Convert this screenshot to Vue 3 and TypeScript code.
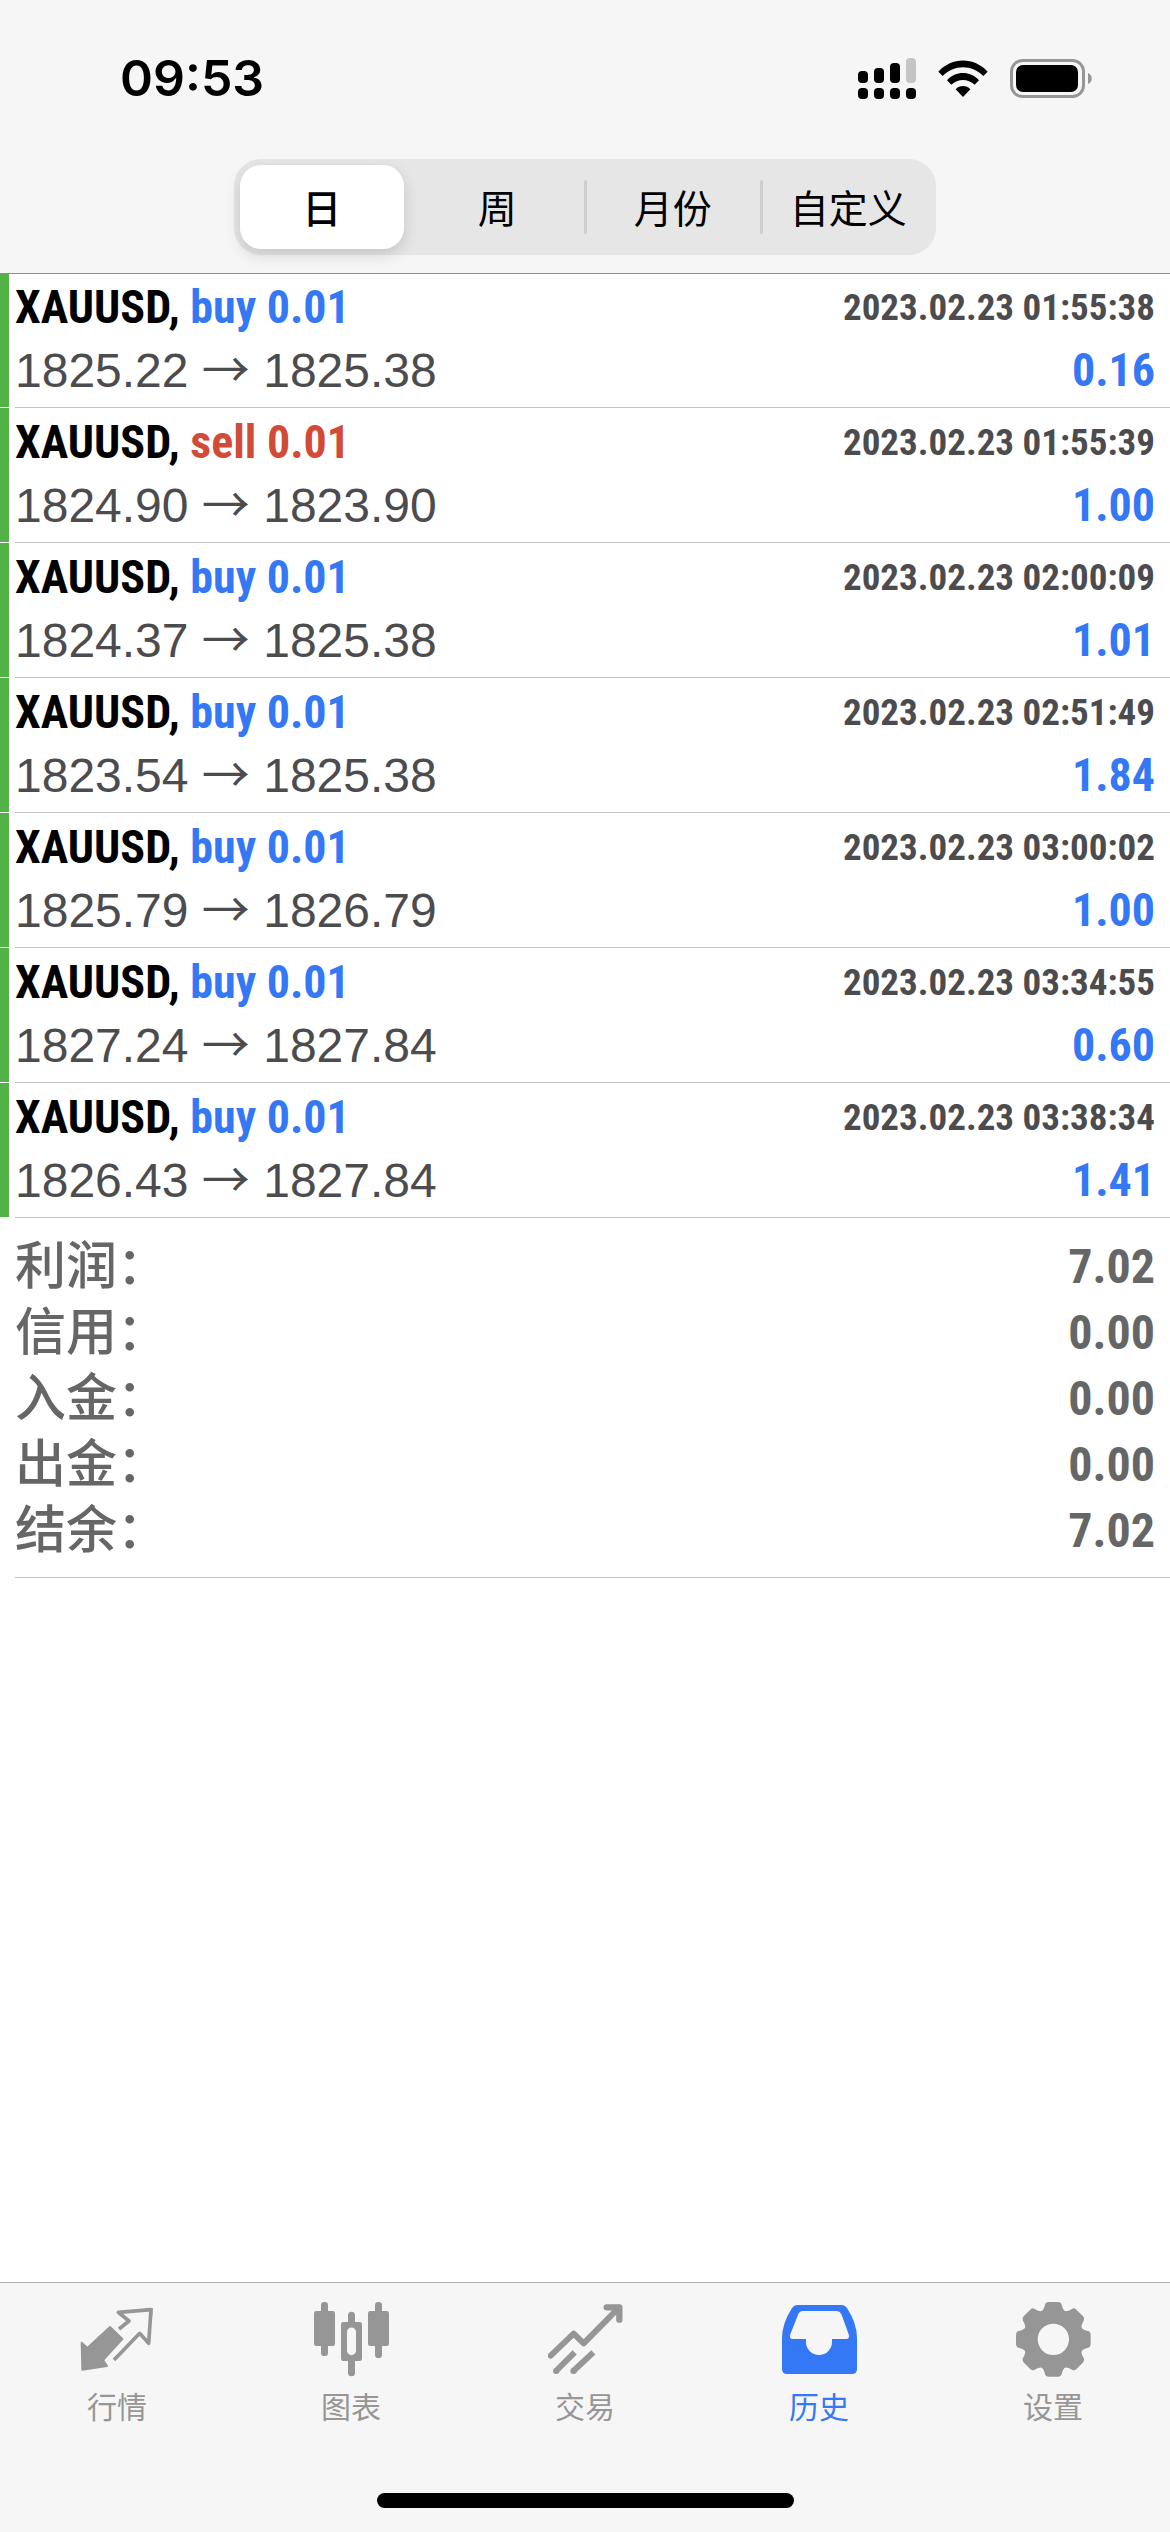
<script setup lang="ts">
import { ref } from 'vue'

type Side = 'buy' | 'sell'

interface Deal {
  symbol: string
  side: Side
  volume: string
  open: string
  close: string
  time: string
  profit: string
}

const periods: string[] = ['日', '周', '月份', '自定义']
const activePeriod = ref<number>(0)

const deals: Deal[] = [
  { symbol: 'XAUUSD', side: 'buy', volume: '0.01', open: '1825.22', close: '1825.38', time: '2023.02.23 01:55:38', profit: '0.16' },
  { symbol: 'XAUUSD', side: 'sell', volume: '0.01', open: '1824.90', close: '1823.90', time: '2023.02.23 01:55:39', profit: '1.00' },
  { symbol: 'XAUUSD', side: 'buy', volume: '0.01', open: '1824.37', close: '1825.38', time: '2023.02.23 02:00:09', profit: '1.01' },
  { symbol: 'XAUUSD', side: 'buy', volume: '0.01', open: '1823.54', close: '1825.38', time: '2023.02.23 02:51:49', profit: '1.84' },
  { symbol: 'XAUUSD', side: 'buy', volume: '0.01', open: '1825.79', close: '1826.79', time: '2023.02.23 03:00:02', profit: '1.00' },
  { symbol: 'XAUUSD', side: 'buy', volume: '0.01', open: '1827.24', close: '1827.84', time: '2023.02.23 03:34:55', profit: '0.60' },
  { symbol: 'XAUUSD', side: 'buy', volume: '0.01', open: '1826.43', close: '1827.84', time: '2023.02.23 03:38:34', profit: '1.41' },
]

const totals: { label: string; value: string }[] = [
  { label: '利润：', value: '7.02' },
  { label: '信用：', value: '0.00' },
  { label: '入金：', value: '0.00' },
  { label: '出金：', value: '0.00' },
  { label: '结余：', value: '7.02' },
]

const tabs: { id: string; label: string }[] = [
  { id: 'quotes', label: '行情' },
  { id: 'charts', label: '图表' },
  { id: 'trade', label: '交易' },
  { id: 'history', label: '历史' },
  { id: 'settings', label: '设置' },
]
const activeTab = ref<string>('history')
const toothAngles: number[] = [0, 45, 90, 135, 180, 225, 270, 315]
</script>

<template>
  <div class="screen">
    <header class="header">
      <div class="status-bar">
        <time class="clock">09:53</time>
        <div class="status-icons">
          <svg class="signal" viewBox="0 0 58 41" aria-hidden="true">
            <rect x="0" y="13" width="10" height="12" rx="4" />
            <rect x="16" y="10" width="10" height="15" rx="4" />
            <rect x="32" y="5" width="10" height="20" rx="4" />
            <rect x="48" y="0" width="10" height="25" rx="4" fill="#c5c5c5" />
            <rect x="0" y="30" width="10" height="11" rx="4" />
            <rect x="16" y="30" width="10" height="11" rx="4" />
            <rect x="32" y="30" width="10" height="11" rx="4" />
            <rect x="48" y="30" width="10" height="11" rx="4" />
          </svg>
          <svg class="wifi" viewBox="0 0 150 111" aria-hidden="true">
            <path d="M1 35 C42 -10 108 -10 149 35 L136 48 C102 13 48 13 14 48 Z" />
            <path d="M27 61 C54 32 96 32 123 61 L110 74 C90 55 60 55 40 74 Z" />
            <path d="M53 88 C65 75 85 75 97 88 L75 111 Z" />
          </svg>
          <svg class="battery" viewBox="0 0 82 39" aria-hidden="true">
            <rect x="1.5" y="1.5" width="72" height="36" rx="11" fill="none" stroke="#969696" stroke-width="3" />
            <rect x="6" y="6" width="62" height="27" rx="7" />
            <path d="M78 14 C83 16 83 23 78 25 Z" fill="#969696" />
          </svg>
        </div>
      </div>
      <div class="segments">
        <button
          v-for="(period, index) in periods"
          :key="period"
          type="button"
          class="segment"
          :class="{ selected: index === activePeriod }"
          :aria-pressed="index === activePeriod"
          @click="activePeriod = index"
        >{{ period }}</button>
      </div>
    </header>

    <main class="content">
      <ul class="deals">
        <li v-for="deal in deals" :key="deal.time" class="deal">
          <span class="marker"></span>
          <div class="deal-body">
            <div class="deal-line">
              <span class="title">{{ deal.symbol }}, <span :class="deal.side">{{ deal.side }} {{ deal.volume }}</span></span>
              <time class="deal-time">{{ deal.time }}</time>
            </div>
            <div class="deal-line">
              <span class="prices">{{ deal.open }} <span class="arrow">→</span> {{ deal.close }}</span>
              <span class="profit">{{ deal.profit }}</span>
            </div>
          </div>
        </li>
      </ul>
      <dl class="totals">
        <div v-for="total in totals" :key="total.label" class="total">
          <dt>{{ total.label }}</dt>
          <dd>{{ total.value }}</dd>
        </div>
      </dl>
    </main>

    <footer class="footer">
      <nav class="tabs">
        <button
          v-for="tab in tabs"
          :key="tab.id"
          type="button"
          class="tab"
          :class="{ active: tab.id === activeTab }"
          @click="activeTab = tab.id"
        >
          <svg class="tab-icon" viewBox="0 0 225 225" fill="currentColor" aria-hidden="true">
            <template v-if="tab.id === 'quotes'">
              <path d="M5 122 L22 138 L90 75 L127 111 L69 174 L81 192 L7 203 Z" stroke="currentColor" stroke-width="6" stroke-linejoin="round" />
              <path d="M117 81 L147 57 L115 31 L213 23 L206 124 L179 94 L102 174" fill="none" stroke="currentColor" stroke-width="11" stroke-linejoin="round" />
              <path d="M195 18 L218 18 L217 40 Z" />
            </template>
            <template v-else-if="tab.id === 'charts'">
              <rect x="0" y="27" width="63" height="105" rx="7" />
              <rect x="21" y="0" width="21" height="162" rx="10" />
              <rect x="162" y="27" width="63" height="105" rx="7" />
              <rect x="183" y="0" width="21" height="168" rx="10" />
              <path d="M102 60 V40 A10 10 0 0 1 123 40 V60 H137 A7 7 0 0 1 144 67 V170 A7 7 0 0 1 137 177 H123 V212 A10 10 0 0 1 102 212 V177 H88 A7 7 0 0 1 81 170 V67 A7 7 0 0 1 88 60 Z M99 90 V146 A13 13 0 0 0 126 146 V90 A13 13 0 0 0 99 90 Z" fill-rule="evenodd" />
            </template>
            <g v-else-if="tab.id === 'trade'" fill="none" stroke="currentColor" stroke-width="18" stroke-linejoin="round">
              <path d="M8 161 L77 95 L107 124 L213 17" stroke-linecap="round" />
              <path d="M176 16 H214 V53" stroke-width="19" stroke-linecap="round" />
              <path d="M80 151 L24 207 M136 151 L76 207" />
              <path d="M24 207 h1 M76 207 h1" stroke-linecap="round" />
            </g>
            <path
              v-else-if="tab.id === 'history'"
              fill-rule="evenodd"
              d="M45 9 H180 Q189 9 195 18 Q225 65 225 108 V201 Q225 216 210 216 H15 Q0 216 0 201 V108 Q0 65 30 18 Q36 9 45 9 Z M62 27 Q53 27 49 36 L25 97 Q20 111 33 111 H72 V120 A39 39 0 0 0 150 120 V111 H192 Q205 111 200 97 L178 36 Q173 27 164 27 Z"
            />
            <g v-else>
              <circle cx="112" cy="112" r="67" fill="none" stroke="currentColor" stroke-width="40" />
              <path
                v-for="angle in toothAngles"
                :key="angle"
                :transform="`translate(112 112) rotate(${angle})`"
                d="M-14 -112 H14 Q23 -112 25 -104 Q28 -89 37 -83 L30 -70 H-30 L-37 -83 Q-28 -89 -25 -104 Q-23 -112 -14 -112 Z"
              />
            </g>
          </svg>
          <span class="tab-label">{{ tab.label }}</span>
        </button>
      </nav>
      <div class="home-indicator"></div>
    </footer>
  </div>
</template>

<style>
body {
  margin: 0;
  background: #fff;
}
</style>

<style scoped>
.screen {
  display: flex;
  flex-direction: column;
  min-height: 100vh;
  background: #fff;
  color: #000;
  font-family: "Liberation Sans", "Noto Sans CJK SC", sans-serif;
}

button {
  margin: 0;
  padding: 0;
  border: 0;
  background: none;
  font-family: "Noto Sans CJK SC", sans-serif;
}

.header {
  padding-bottom: 18px;
  border-bottom: 1px solid #8e8e8e;
  background: #f6f6f6;
}

.status-bar {
  display: flex;
  align-items: center;
  justify-content: space-between;
  height: 156px;
  padding: 0 78px 0 120px;
}

.clock {
  font-family: Inter, sans-serif;
  font-size: 50px;
  font-weight: 600;
  line-height: 60px;
}

.status-icons {
  display: flex;
  align-items: center;
  gap: 22px;
}

.signal {
  width: 58px;
  height: 41px;
}

.wifi {
  width: 50px;
  height: 37px;
}

.battery {
  width: 82px;
  height: 39px;
}

.segments {
  display: grid;
  grid-template-columns: repeat(4, 1fr);
  width: 60%;
  height: 96px;
  margin: 3px auto 0;
  border-radius: 27px;
  background: #e6e6e7;
}

.segment {
  position: relative;
  margin: 6px;
  padding-bottom: 3px;
  border-radius: 21px;
  color: #000;
  font-size: 39px;
  line-height: 48px;
  white-space: nowrap;
}

.segment.selected {
  background: #fff;
  box-shadow: 0 6px 16px rgba(0, 0, 0, 0.14);
  font-weight: 500;
}

.segment:not(.selected) + .segment::before {
  content: "";
  position: absolute;
  top: 15px;
  bottom: 15px;
  left: -7px;
  width: 3px;
  border-radius: 2px;
  background: #cececf;
}

.content {
  flex: 1;
}

.deals,
.totals {
  margin: 0;
  padding: 0;
  list-style: none;
}

.deal {
  display: flex;
  gap: 6px;
}

.marker {
  width: 9px;
  margin-bottom: 1px;
  background: #53b245;
}

.deal-body {
  flex: 1;
  padding: 3px 15px 5px 0;
  border-bottom: 1px solid #c3c3c3;
}

.deal:first-child .deal-body {
  padding-top: 2px;
}

.deal-line {
  display: flex;
  align-items: center;
  justify-content: space-between;
  height: 63px;
  line-height: 63px;
  white-space: nowrap;
}

.title,
.deal-time,
.profit,
dd {
  font-family: "Roboto Condensed", "Liberation Sans Narrow", "Liberation Sans", sans-serif;
  font-weight: 700;
}

.prices {
  font-size: 48px;
}

.title,
.profit {
  font-size: 46px;
}

.prices,
.deal-time {
  color: #4c4c4f;
}

.deal-time {
  font-size: 37px;
}

.arrow {
  font-family: "Noto Sans CJK SC", sans-serif;
  line-height: 1;
}

.buy,
.profit {
  color: #3478f6;
}

.sell {
  color: #d14b38;
}

.totals {
  margin-left: 15px;
  padding: 16px 15px 13px 0;
  border-bottom: 1px solid #c3c3c3;
  color: #666;
}

.total {
  display: flex;
  justify-content: space-between;
  height: 66px;
  line-height: 66px;
}

dt {
  font-size: 51px;
  font-weight: 500;
}

dd {
  margin: 0;
  font-size: 48px;
}

.footer {
  display: flex;
  flex-direction: column;
  align-items: center;
  padding-bottom: 24px;
  border-top: 1px solid #b0b0b0;
  background: #f6f6f6;
}

.tabs {
  display: flex;
  align-self: stretch;
  height: 210px;
}

.tab {
  display: flex;
  flex: 1;
  flex-direction: column;
  align-items: center;
  gap: 6px;
  padding-top: 19px;
  color: #969696;
  font-size: 30px;
  line-height: 44px;
}

.tab.active {
  color: #3478f6;
}

.tab-icon {
  width: 75px;
  height: 75px;
}

.home-indicator {
  width: 417px;
  height: 15px;
  border-radius: 8px;
  background: #000;
}
</style>
